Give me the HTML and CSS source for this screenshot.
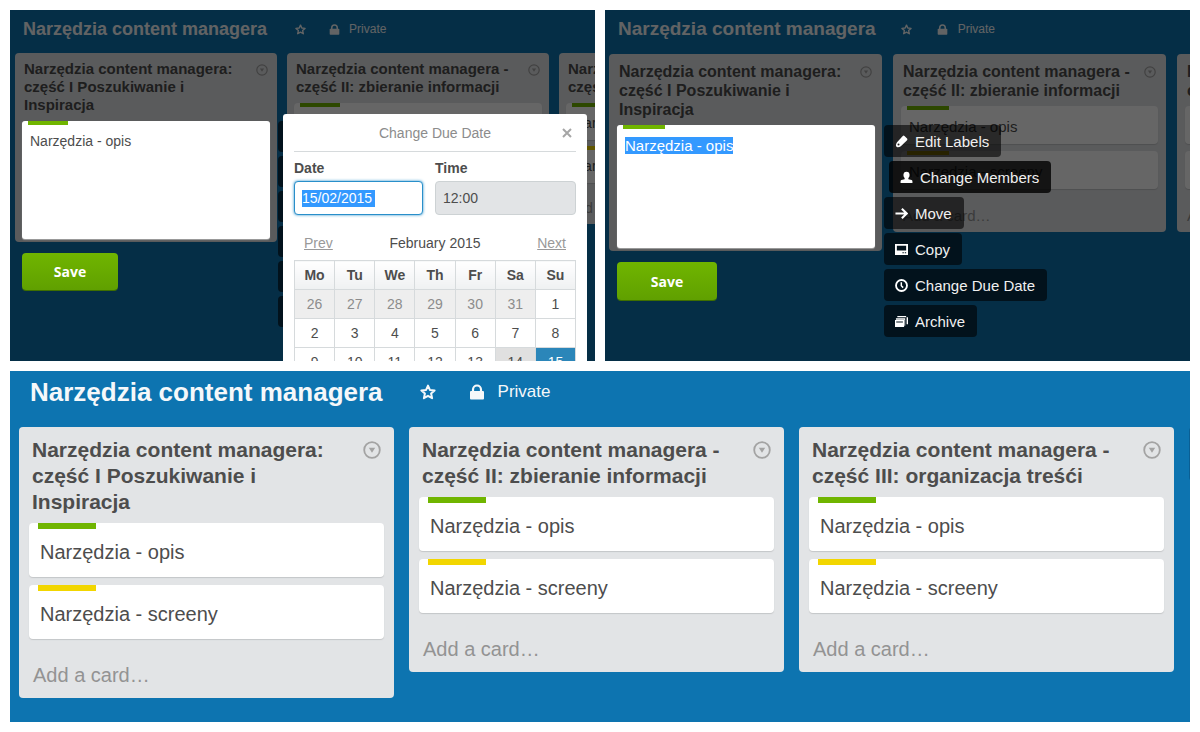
FILE: index.html
```
<!DOCTYPE html>
<html lang="pl">
<head>
    <meta charset="UTF-8">
    <meta name="viewport" content="width=device-width, initial-scale=1.0">
    <title>Narzędzia content managera</title>
    <link rel="stylesheet" href="styles.css">
</head>
<body>
    <!-- Shared icons -->
    <svg class="icon-defs" aria-hidden="true">
        <symbol id="icon-star" viewBox="0 0 16 16"><path d="M8 1.600l1.900 4.300 4.700.5-3.500 3.100 1 4.700L8 11.800l-4.100 2.400 1-4.700-3.500-3.100 4.700-.5z" fill="none" stroke="currentColor" stroke-width="2" stroke-linejoin="round"/></symbol>
        <symbol id="icon-lock" viewBox="0 0 16 16"><path d="M4 8V5.500a4 4 0 0 1 8 0V8" fill="none" stroke="currentColor" stroke-width="2.200"/><rect x="1" y="7" width="14" height="8.500" rx="1" fill="currentColor"/></symbol>
        <symbol id="icon-down" viewBox="0 0 18 18"><circle cx="9" cy="9" r="7.800" fill="none" stroke="currentColor" stroke-width="1.800"/><path d="M5.800 6.800h6.400L9 11.800z" fill="currentColor"/></symbol>
        <symbol id="icon-label" viewBox="0 0 14 14"><path d="M8.400 1q1-.8 1.800 0l2.800 2.800q.8.900 0 1.800L6.300 12.200q-1.600 1-3.700.9-1.800-.2-1.600-2.100.1-1.700 1.200-3.200z" fill="currentColor"/><circle cx="3.800" cy="10.300" r="1.100" fill="#222"/></symbol>
        <symbol id="icon-member" viewBox="0 0 14 14"><ellipse cx="7" cy="4.400" rx="3.300" ry="3.600" fill="currentColor"/><path d="M5 7h4v1.800l3.500 1q.9.400.9 1.400V13H.6v-1.800q0-1 .9-1.400l3.500-1z" fill="currentColor"/></symbol>
        <symbol id="icon-move" viewBox="0 0 14 14"><path d="M.5 7h12M7.400 1.800L12.600 7l-5.200 5.200" fill="none" stroke="currentColor" stroke-width="2.200"/></symbol>
        <symbol id="icon-copy" viewBox="0 0 14 14"><path d="M0 1h14v12H0zM2 3v5h10V3zM8 10v1h1.500v-1zm2.500 0v1H12v-1z" fill="currentColor" fill-rule="evenodd"/></symbol>
        <symbol id="icon-clock" viewBox="0 0 14 14"><circle cx="7" cy="7" r="5.900" fill="none" stroke="currentColor" stroke-width="2"/><path d="M6.800 3.400V7.300l2 2" fill="none" stroke="currentColor" stroke-width="1.600"/></symbol>
        <symbol id="icon-archive" viewBox="0 0 14 14"><path d="M2.500 1H12v1.500H2.500zM12.500 2.500H14V10h-1.500zM1 3.500h10v8H10.200V5H1zM0 5.500h9.800V13H0zm1.300 1.600v1h7.200v-1z" fill="currentColor" fill-rule="evenodd"/></symbol>
    </svg>

    <main class="gallery">
        <!-- Quick edit with due date popup -->
        <section class="board board-small">
            <header class="board-header">
                <h1>Narzędzia content managera</h1>
                <svg class="icon star"><use href="#icon-star"/></svg>
                <svg class="icon"><use href="#icon-lock"/></svg>
                <span class="visibility">Private</span>
            </header>
            <div class="lists">
                <div class="list">
                    <div class="list-header">
                        <h2>Narzędzia content managera: część I Poszukiwanie i Inspiracja</h2>
                        <svg class="list-menu"><use href="#icon-down"/></svg>
                    </div>
                    <div class="card"><span class="label green"></span><p>Narzędzia - opis</p></div>
                    <div class="card"><span class="label yellow"></span><p>Narzędzia - screeny</p></div>
                    <a class="add-card" href="#">Add a card…</a>
                </div>
                <div class="list">
                    <div class="list-header">
                        <h2>Narzędzia content managera - część II: zbieranie informacji</h2>
                        <svg class="list-menu"><use href="#icon-down"/></svg>
                    </div>
                    <div class="card"><span class="label green"></span><p>Narzędzia - opis</p></div>
                    <div class="card"><span class="label yellow"></span><p>Narzędzia - screeny</p></div>
                    <a class="add-card" href="#">Add a card…</a>
                </div>
                <div class="list">
                    <div class="list-header">
                        <h2>Narzędzia content managera - część III: organizacja treśći</h2>
                        <svg class="list-menu"><use href="#icon-down"/></svg>
                    </div>
                    <div class="card"><span class="label green"></span><p>Narzędzia - opis</p></div>
                    <div class="card"><span class="label yellow"></span><p>Narzędzia - screeny</p></div>
                    <a class="add-card" href="#">Add a card…</a>
                </div>
            </div>
            <div class="overlay"></div>
            <div class="quick-edit">
                <div class="quick-main">
                    <div class="quick-card">
                        <span class="label green"></span>
                        <textarea aria-label="Card title">Narzędzia - opis</textarea>
                    </div>
                    <button class="save">Save</button>
                </div>
                <div class="quick-menu">
                    <button aria-label="Edit Labels"><svg><use href="#icon-label"/></svg></button>
                    <button aria-label="Change Members"><svg><use href="#icon-member"/></svg></button>
                    <button aria-label="Move"><svg><use href="#icon-move"/></svg></button>
                    <button aria-label="Copy"><svg><use href="#icon-copy"/></svg></button>
                    <button aria-label="Change Due Date"><svg><use href="#icon-clock"/></svg></button>
                    <button aria-label="Archive"><svg><use href="#icon-archive"/></svg></button>
                </div>
            </div>
            <div class="popup">
                <div class="popup-header">
                    <span>Change Due Date</span>
                    <button class="close" aria-label="Close"><svg viewBox="0 0 10 10"><path d="M1 1l8 8M9 1L1 9" stroke="currentColor" stroke-width="2"/></svg></button>
                </div>
                <div class="fields">
                    <div class="field">
                        <label for="due-date">Date</label>
                        <input type="text" id="due-date" class="focused" value="15/02/2015">
                    </div>
                    <div class="field">
                        <label for="due-time">Time</label>
                        <input type="text" id="due-time" value="12:00">
                    </div>
                </div>
                <div class="month">
                    <a href="#">Prev</a>
                    <span>February 2015</span>
                    <a href="#">Next</a>
                </div>
                <table class="calendar">
                    <thead>
                        <tr><th>Mo</th><th>Tu</th><th>We</th><th>Th</th><th>Fr</th><th>Sa</th><th>Su</th></tr>
                    </thead>
                    <tbody>
                        <tr><td class="other">26</td><td class="other">27</td><td class="other">28</td><td class="other">29</td><td class="other">30</td><td class="other">31</td><td>1</td></tr>
                        <tr><td>2</td><td>3</td><td>4</td><td>5</td><td>6</td><td>7</td><td>8</td></tr>
                        <tr><td>9</td><td>10</td><td>11</td><td>12</td><td>13</td><td class="today">14</td><td class="selected">15</td></tr>
                    </tbody>
                </table>
            </div>
        </section>

        <!-- Quick edit with card menu -->
        <section class="board board-medium">
            <header class="board-header">
                <h1>Narzędzia content managera</h1>
                <svg class="icon star"><use href="#icon-star"/></svg>
                <svg class="icon"><use href="#icon-lock"/></svg>
                <span class="visibility">Private</span>
            </header>
            <div class="lists">
                <div class="list">
                    <div class="list-header">
                        <h2>Narzędzia content managera: część I Poszukiwanie i Inspiracja</h2>
                        <svg class="list-menu"><use href="#icon-down"/></svg>
                    </div>
                    <div class="card"><span class="label green"></span><p>Narzędzia - opis</p></div>
                    <div class="card"><span class="label yellow"></span><p>Narzędzia - screeny</p></div>
                    <a class="add-card" href="#">Add a card…</a>
                </div>
                <div class="list">
                    <div class="list-header">
                        <h2>Narzędzia content managera - część II: zbieranie informacji</h2>
                        <svg class="list-menu"><use href="#icon-down"/></svg>
                    </div>
                    <div class="card"><span class="label green"></span><p>Narzędzia - opis</p></div>
                    <div class="card"><span class="label yellow"></span><p>Narzędzia - screeny</p></div>
                    <a class="add-card" href="#">Add a card…</a>
                </div>
                <div class="list">
                    <div class="list-header">
                        <h2>Narzędzia content managera - część III: organizacja treśći</h2>
                        <svg class="list-menu"><use href="#icon-down"/></svg>
                    </div>
                    <div class="card"><span class="label green"></span><p>Narzędzia - opis</p></div>
                    <div class="card"><span class="label yellow"></span><p>Narzędzia - screeny</p></div>
                    <a class="add-card" href="#">Add a card…</a>
                </div>
            </div>
            <div class="overlay"></div>
            <div class="quick-edit">
                <div class="quick-main">
                    <div class="quick-card">
                        <span class="label green"></span>
                        <textarea class="selected-text" aria-label="Card title">Narzędzia - opis</textarea>
                    </div>
                    <button class="save">Save</button>
                </div>
                <div class="quick-menu">
                    <button><svg><use href="#icon-label"/></svg>Edit Labels</button>
                    <button class="active"><svg><use href="#icon-member"/></svg>Change Members</button>
                    <button><svg><use href="#icon-move"/></svg>Move</button>
                    <button><svg><use href="#icon-copy"/></svg>Copy</button>
                    <button><svg><use href="#icon-clock"/></svg>Change Due Date</button>
                    <button><svg><use href="#icon-archive"/></svg>Archive</button>
                </div>
            </div>
        </section>

        <!-- Whole board -->
        <section class="board board-large">
            <header class="board-header">
                <h1>Narzędzia content managera</h1>
                <svg class="icon star"><use href="#icon-star"/></svg>
                <svg class="icon"><use href="#icon-lock"/></svg>
                <span class="visibility">Private</span>
            </header>
            <div class="lists">
                <div class="list">
                    <div class="list-header">
                        <h2>Narzędzia content managera: część I Poszukiwanie i Inspiracja</h2>
                        <svg class="list-menu"><use href="#icon-down"/></svg>
                    </div>
                    <div class="card"><span class="label green"></span><p>Narzędzia - opis</p></div>
                    <div class="card"><span class="label yellow"></span><p>Narzędzia - screeny</p></div>
                    <a class="add-card" href="#">Add a card…</a>
                </div>
                <div class="list">
                    <div class="list-header">
                        <h2>Narzędzia content managera - część II: zbieranie informacji</h2>
                        <svg class="list-menu"><use href="#icon-down"/></svg>
                    </div>
                    <div class="card"><span class="label green"></span><p>Narzędzia - opis</p></div>
                    <div class="card"><span class="label yellow"></span><p>Narzędzia - screeny</p></div>
                    <a class="add-card" href="#">Add a card…</a>
                </div>
                <div class="list">
                    <div class="list-header">
                        <h2>Narzędzia content managera - część III: organizacja treśći</h2>
                        <svg class="list-menu"><use href="#icon-down"/></svg>
                    </div>
                    <div class="card"><span class="label green"></span><p>Narzędzia - opis</p></div>
                    <div class="card"><span class="label yellow"></span><p>Narzędzia - screeny</p></div>
                    <a class="add-card" href="#">Add a card…</a>
                </div>
                <div class="new-list"></div>
            </div>
        </section>
    </main>
</body>
</html>
```
FILE: styles.css
```
/* General styles */
* {
    box-sizing: border-box;
}

body {
    margin: 0;
    background-color: #ffffff;
    color: #4d4d4d;
    font-family: "Liberation Sans", Arial, sans-serif;
}

h1, h2, p {
    margin: 0;
}

button, input, textarea {
    font-family: inherit;
}

.icon-defs {
    position: absolute;
    width: 0;
    height: 0;
}

.gallery {
    display: grid;
    grid-template-columns: 1fr 1fr;
    grid-template-rows: 1fr 1fr;
    gap: 10px;
    height: 100vh;
    padding: 10px;
}

/* Board sizes */
.board-small {
    --title-size: 18px;
    --title-line: 38px;
    --header-pad: 0 13px 5px;
    --title-gap: 28px;
    --icon-gap: 23px;
    --text-gap: 9px;
    --icon: 11px;
    --meta-size: 12px;
    --board-pad: 5px;
    --list-width: 262px;
    --list-gap: 10px;
    --list-pad: 7px;
    --list-bottom: 7px;
    --name-size: 15px;
    --line: 18px;
    --name-pad: 0 2px 7px;
    --menu-icon: 12px;
    --card-size: 14px;
    --card-gap: 6px;
    --card-pad: 7px 8px 8px;
    --label-width: 40px;
    --label-height: 4px;
    --label-left: 6px;
    --add-pad: 10px 2px 0;
}

.board-medium {
    --title-size: 19px;
    --title-line: 38px;
    --header-pad: 0 13px 6px;
    --title-gap: 25px;
    --icon-gap: 25px;
    --text-gap: 10px;
    --icon: 11px;
    --meta-size: 12px;
    --board-pad: 4px;
    --list-width: 273px;
    --list-gap: 11px;
    --list-pad: 8px;
    --list-bottom: 7px;
    --name-size: 16px;
    --line: 19px;
    --name-pad: 0 2px 6px;
    --menu-icon: 12px;
    --card-size: 15px;
    --card-gap: 7px;
    --card-pad: 7px 8px 8px;
    --label-width: 42px;
    --label-height: 4px;
    --label-left: 6px;
    --add-pad: 10px 2px 0;
}

.board-large {
    --title-size: 26px;
    --title-line: 42px;
    --header-pad: 0 20px 14px;
    --title-gap: 37px;
    --icon-gap: 33px;
    --text-gap: 13px;
    --icon: 16px;
    --meta-size: 17px;
    --board-pad: 9px;
    --list-width: 375px;
    --list-gap: 15px;
    --list-pad: 10px;
    --list-bottom: 10px;
    --name-size: 21px;
    --line: 26px;
    --name-pad: 0 3px 8px;
    --menu-icon: 18px;
    --card-size: 20px;
    --card-gap: 8px;
    --card-pad: 10px 11px 12px;
    --label-width: 58px;
    --label-height: 6px;
    --label-left: 9px;
    --add-pad: 15px 4px 0;
    grid-column: 1 / -1;
}

/* Board styles */
.board {
    position: relative;
    min-width: 0;
    overflow: hidden;
    background-color: #0d74b0;
}

.board-header {
    display: flex;
    align-items: center;
    padding: var(--header-pad);
    color: #f5f8fa;
    line-height: var(--title-line);
    white-space: nowrap;
}

.board-header h1 {
    font-size: var(--title-size);
}

.icon {
    flex: none;
    width: var(--icon);
    height: var(--icon);
    margin-left: var(--icon-gap);
}

.icon.star {
    margin-left: var(--title-gap);
}

.visibility {
    margin-left: var(--text-gap);
    font-size: var(--meta-size);
}

.lists {
    display: flex;
    align-items: flex-start;
    gap: var(--list-gap);
    padding: 0 var(--board-pad);
}

/* List and card styles */
.list {
    flex: none;
    width: var(--list-width);
    padding: var(--list-pad) var(--list-pad) var(--list-bottom);
    border-radius: 4px;
    background-color: #e2e4e6;
}

.list-header {
    display: flex;
    align-items: flex-start;
    justify-content: space-between;
    gap: 10px;
    padding: var(--name-pad);
}

.list-header h2 {
    font-size: var(--name-size);
    line-height: var(--line);
}

.board-large .list-header h2 {
    padding-right: 8px;
}

.list-menu {
    flex: none;
    width: var(--menu-icon);
    height: var(--menu-icon);
    margin-top: 4px;
    color: #a3a3a3;
}

.card {
    margin-bottom: var(--card-gap);
    border-radius: 4px;
    background-color: #ffffff;
    box-shadow: 0 1px 1px #c4c6c8;
}

.card p {
    padding: var(--card-pad);
    font-size: var(--card-size);
    line-height: var(--line);
}

.label {
    display: block;
    width: var(--label-width);
    height: var(--label-height);
    margin-left: var(--label-left);
}

.label.green {
    background-color: #70b500;
}

.label.yellow {
    background-color: #f2d600;
}

.add-card {
    display: block;
    padding: var(--add-pad);
    color: #939393;
    font-size: var(--card-size);
    line-height: var(--line);
    text-decoration: none;
}

.new-list {
    flex: none;
    width: var(--list-width);
    height: 54px;
    border-radius: 4px;
    background-color: #0a5f94;
}

/* Quick edit styles */
.overlay {
    position: absolute;
    inset: 0;
    background-color: rgba(0, 0, 0, 0.6);
}

.quick-edit {
    position: absolute;
    top: 111px;
    left: 12px;
    display: flex;
    gap: 8px;
}

.quick-main {
    width: 248px;
}

.quick-card {
    display: flex;
    flex-direction: column;
    height: 118px;
    border-radius: 3px;
    background-color: #ffffff;
    box-shadow: 0 1px 1px #a0a0a0;
}

.quick-card textarea {
    flex: 1;
    padding: var(--card-pad);
    border: 0;
    outline: 0;
    background-color: transparent;
    color: #4d4d4d;
    font-size: var(--card-size);
    line-height: var(--line);
    resize: none;
}

.quick-card .selected-text {
    background: linear-gradient(#3399ff, #3399ff) no-repeat 8px 8px / 108px 17px;
    color: #ffffff;
}

.save {
    width: 96px;
    height: 37px;
    margin-top: 14px;
    border: 0;
    border-radius: 4px;
    background: linear-gradient(#70b500, #60a000);
    box-shadow: 0 1px 0 #3f6f00;
    color: #ffffff;
    font-family: "Open Sans", sans-serif;
    font-size: 14px;
    font-weight: bold;
}

.quick-menu {
    display: flex;
    flex-direction: column;
    align-items: flex-start;
    gap: 4px;
}

.quick-menu button {
    display: flex;
    align-items: center;
    gap: 7px;
    height: 31px;
    padding: 0 12px 0 11px;
    border: 0;
    border-radius: 4px;
    background-color: rgba(0, 0, 0, 0.6);
    color: #f0f0f0;
    font-size: 15px;
    white-space: nowrap;
}

.quick-menu .active {
    margin-left: 5px;
    background-color: rgba(0, 0, 0, 0.8);
}

.quick-menu svg {
    width: 13px;
    height: 13px;
    color: #ffffff;
}

.board-medium .quick-edit {
    top: 115px;
    gap: 9px;
}

.board-medium .quick-main {
    width: 258px;
}

.board-medium .quick-card {
    height: 123px;
}

.board-medium .save {
    width: 100px;
    height: 38px;
}

.board-medium .quick-menu button {
    height: 32px;
}

/* Due date popup */
.popup {
    position: absolute;
    top: 104px;
    left: 273px;
    width: 304px;
    padding: 0 11px 11px;
    border-radius: 3px;
    background-color: #ffffff;
    font-size: 14px;
}

.popup-header {
    display: grid;
    grid-template-columns: 18px 1fr 18px;
    align-items: center;
    height: 38px;
    border-bottom: 1px solid #d6dadc;
    color: #8c8c8c;
    text-align: center;
}

.popup-header span {
    grid-column: 2;
}

.close {
    display: flex;
    align-items: center;
    justify-content: center;
    height: 18px;
    padding: 0;
    border: 0;
    background: none;
    color: #a6a6a6;
}

.close svg {
    width: 10px;
    height: 10px;
}

.fields {
    display: grid;
    grid-template-columns: 129px 1fr;
    gap: 12px;
    padding-top: 7px;
}

.field label {
    display: block;
    margin-bottom: 4px;
    font-size: 14px;
    font-weight: bold;
    line-height: 18px;
}

.field input {
    width: 100%;
    height: 34px;
    padding: 0 7px;
    border: 1px solid #cdd2d4;
    border-radius: 4px;
    background-color: #e2e4e6;
    color: #4d4d4d;
    font-size: 14px;
}

.field .focused {
    border-color: #298fca;
    outline: 0;
    background: linear-gradient(#3399ff, #3399ff) no-repeat 7px 50% / 73px 17px #ffffff;
    box-shadow: 0 0 3px #298fca;
    color: #ffffff;
}

.month {
    display: flex;
    align-items: center;
    justify-content: space-between;
    height: 45px;
    padding: 10px 10px 0;
}

.month a {
    color: #999999;
}

.calendar {
    width: 100%;
    border-collapse: collapse;
    table-layout: fixed;
    text-align: center;
}

.calendar th,
.calendar td {
    height: 29px;
    padding: 0;
    border: 1px solid #d6dadc;
}

.calendar th {
    background: linear-gradient(#ffffff, #eff1f2);
}

.calendar .other {
    background-color: #eeeeee;
    color: #8c8c8c;
}

.calendar .today {
    background-color: #e0e0e0;
}

.calendar .selected {
    background-color: #2b86b9;
    color: #ffffff;
}
```
